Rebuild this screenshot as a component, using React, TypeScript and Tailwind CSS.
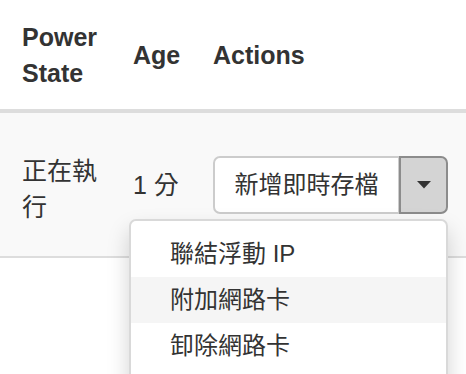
import React from "react";

const font = '"Liberation Sans", "Noto Sans CJK TC", sans-serif';

export default function App() {
  return (
    <div
      className="w-[466px] h-[374px] overflow-hidden bg-white text-[#333] text-[25px] leading-[36px]"
      style={{ fontFamily: font }}
    >
      {/* header */}
      <div className="flex items-center h-[109px] border-b-[4px] border-[#dddddd] box-content font-bold">
        <div className="w-[119px] pl-[22px] pr-[14px]">
          Power
          <br />
          State
        </div>
        <div className="w-[80px] pl-[14px]">Age</div>
        <div className="pl-[14px]">Actions</div>
      </div>
      {/* row */}
      <div className="flex items-center h-[143px] bg-[#f9f9f9] border-b-[2px] border-[#dddddd] box-content">
        <div className="w-[119px] pl-[22px] pr-[14px] pt-[8px]">正在執行</div>
        <div className="w-[80px] pl-[14px]">1 分</div>
        <div className="pl-[14px]">
          <div className="relative flex h-[58px]">
            <div className="flex items-center justify-center w-[187px] h-full bg-white border-[2px] border-[#cccccc] rounded-l-[7px] text-[24px]">
              新增即時存檔
            </div>
            <div className="flex items-center justify-center w-[49px] h-full bg-[#d4d4d4] border-[2px] border-[#8c8c8c] rounded-r-[7px] -ml-[1px]">
              <svg width="14" height="8" viewBox="0 0 14 8">
                <path d="M0 0 L14 0 L7 7.5 Z" fill="#333" />
              </svg>
            </div>
            <div className="absolute right-0 top-[63px] w-[319px] h-[200px] bg-white border-[2px] border-[#d9d9d9] rounded-[7px] pt-[10px] shadow-[0_11px_22px_rgba(0,0,0,0.175)] z-10 text-[24px]">
              <div className="h-[46px] flex items-center pl-[39px] whitespace-nowrap">聯結浮動 IP</div>
              <div className="h-[46px] flex items-center pl-[39px] bg-[#f5f5f5] whitespace-nowrap">附加網路卡</div>
              <div className="h-[46px] flex items-center pl-[39px] whitespace-nowrap">卸除網路卡</div>
            </div>
          </div>
        </div>
      </div>
    </div>
  );
}
